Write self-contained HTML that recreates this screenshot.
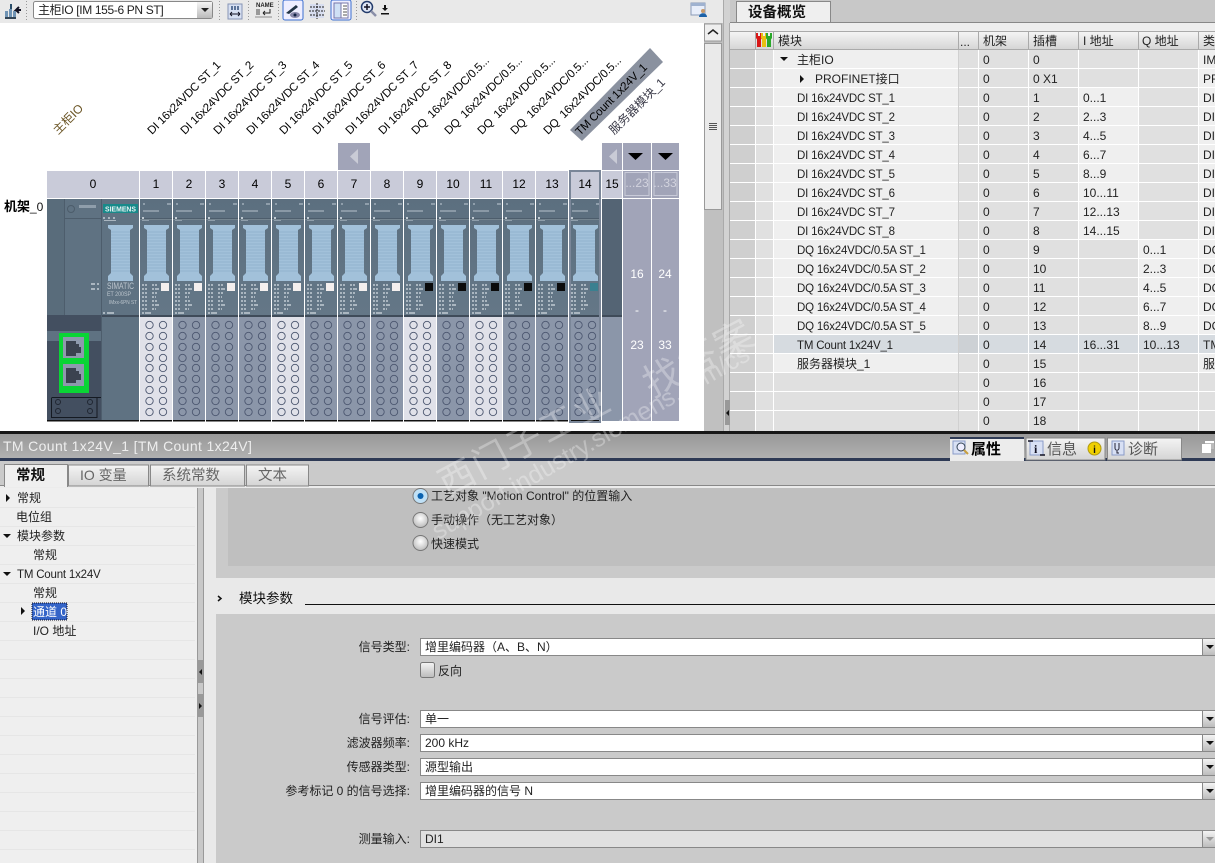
<!DOCTYPE html>
<html><head><meta charset="utf-8"><title>TM Count</title>
<style>
html,body{margin:0;padding:0;background:#c8c8c8;width:1215px;height:863px;overflow:hidden}
svg{display:block}
text{font-family:"Liberation Sans","Noto Sans CJK SC",sans-serif;font-size:12px;fill:#222}
.lab text{font-size:11.5px;letter-spacing:-.2px;fill:#000}
.lab .c{font-size:12px;letter-spacing:0}
.n text,text.n{font-size:11.5px;letter-spacing:-.2px}
.hd text{font-size:12px;fill:#222}
</style></head><body>
<svg width="1215" height="863" viewBox="0 0 1215 863" xmlns="http://www.w3.org/2000/svg">
<defs>
<linearGradient id="gh" x1="0" y1="0" x2="0" y2="1"><stop offset="0" stop-color="#f4f4f4"/><stop offset="1" stop-color="#d4d4d4"/></linearGradient>
<linearGradient id="gt" x1="0" y1="0" x2="0" y2="1"><stop offset="0" stop-color="#999"/><stop offset="1" stop-color="#b0b0b0"/></linearGradient>
<linearGradient id="gb" x1="0" y1="0" x2="0" y2="1"><stop offset="0" stop-color="#f5f5f5"/><stop offset="1" stop-color="#bbb"/></linearGradient>
<linearGradient id="gm" x1="0" y1="0" x2="0" y2="1"><stop offset="0" stop-color="#5c6f7f"/><stop offset="1" stop-color="#647787"/></linearGradient>
<radialGradient id="rb" cx=".5" cy=".4" r=".6"><stop offset="0" stop-color="#fff"/><stop offset="1" stop-color="#bbb"/></radialGradient>
<g id="top">
<rect width="32" height="116" fill="url(#gm)"/>
<rect x="0" y="19" width="32" height="1" fill="#4d5d6c"/>
<rect x="0" y="20" width="32" height="1" fill="#74848f"/>
<rect x="3" y="4" width="2" height="2" fill="#8f9eab"/><rect x="27" y="4" width="4" height="2" fill="#8f9eab"/>
<rect x="3" y="11" width="16" height="2" fill="#8a99a6"/>
<rect x="2" y="18" width="2" height="2" fill="#c0cad2"/><rect x="2" y="21" width="7" height="1" fill="#8f9eab"/>
<path d="M4 26H29V29L26 31V74L29 77V82H4V77L7 74V31L4 29Z" fill="#a2c1da"/>
<path d="M7 33H26M7 36H26M7 39H26M7 42H26M7 45H26M7 48H26M7 51H26M7 54H26M7 57H26M7 60H26M7 63H26M7 66H26M7 69H26M7 72H26" stroke="#93b4cf" stroke-width="1"/>
<path d="M2 85h2v2h-2zM5 85h2v2h-2zM12 85h2v2h-2zM15 85h2v2h-2zM2 89h2v2h-2zM5 89h2v2h-2zM12 89h2v2h-2zM15 89h4v2h-4zM2 93h2v2h-2zM5 93h2v2h-2zM12 93h2v2h-2zM15 93h2v2h-2zM2 97h2v2h-2zM5 97h2v2h-2zM12 97h2v2h-2zM15 97h1v2h-1zM2 101h2v2h-2zM5 101h2v2h-2zM12 101h2v2h-2zM15 101h2v2h-2zM2 105h2v2h-2zM5 105h2v2h-2zM12 105h2v2h-2zM15 105h4v2h-4zM2 109h2v2h-2zM5 109h2v2h-2zM12 109h2v2h-2zM15 109h1v2h-1zM2 113h2v2h-2zM5 113h6v2h-6z" fill="#aab6c0"/>
<rect x="0" y="116" width="32" height="2" fill="#3f4b59"/>
</g>
<g id="holes" fill="none" stroke="#4c5770" stroke-width=".9">
<circle cx="9.500" cy="325" r="3.700"/><circle cx="23" cy="325" r="3.700"/><circle cx="9.500" cy="336" r="3.700"/><circle cx="23" cy="336" r="3.700"/><circle cx="9.500" cy="347" r="3.700"/><circle cx="23" cy="347" r="3.700"/><circle cx="9.500" cy="358" r="3.700"/><circle cx="23" cy="358" r="3.700"/><circle cx="9.500" cy="368" r="3.700"/><circle cx="23" cy="368" r="3.700"/><circle cx="9.500" cy="379" r="3.700"/><circle cx="23" cy="379" r="3.700"/><circle cx="9.500" cy="390" r="3.700"/><circle cx="23" cy="390" r="3.700"/><circle cx="9.500" cy="401" r="3.700"/><circle cx="23" cy="401" r="3.700"/><circle cx="9.500" cy="412" r="3.700"/><circle cx="23" cy="412" r="3.700"/>
</g>
<g id="mL"><use href="#top" y="199"/><rect y="317" width="32" height="103" fill="#e0e1e9"/><use href="#holes"/><rect y="420" width="32" height="1.500" fill="#111"/></g>
<g id="mG"><use href="#top" y="199"/><rect y="317" width="32" height="103" fill="#8b96a9"/><use href="#holes"/><rect y="420" width="32" height="1.500" fill="#111"/></g>
<rect id="sqW" y="283" width="8" height="8" fill="#f4efee"/>
<rect id="sqB" y="283" width="8" height="8" fill="#0b0b0b"/>
</defs>

<!-- editor canvas -->
<rect x="0" y="0" width="723" height="431" fill="#fff"/>
<rect x="0" y="0" width="723" height="23" fill="#e9e9e9"/>
<path d="M26.500 1V22M219.500 1V22M248.500 1V22M278.500 1V22M356.500 1V22" stroke="#999" stroke-dasharray="1 2"/>
<!-- toolbar icons -->
<path d="M5 17V11h3v6zM9 17V9h3v8zM13 17V11h3v6z" fill="#6f93b4"/><path d="M10 4l2 0v5h-2z" fill="#2a4d69"/><path d="M21 10h-5l3-3M16 10l3 3" stroke="#112" stroke-width="2" fill="none"/><rect x="5" y="17" width="11" height="2" fill="#345"/>
<rect x="33.500" y="1.500" width="179" height="17" rx="2" fill="#fff" stroke="#888"/>
<text x="38" y="14" style="letter-spacing:-.35px">主柜IO [IM 155-6 PN ST]</text>
<rect x="197" y="2" width="15" height="16" fill="url(#gb)"/><path d="M201 8h8l-4 4z" fill="#222"/>
<rect x="228" y="4" width="14" height="15" fill="#d7e0f2" stroke="#8795b5"/><path d="M231 6h2v4h-2zM234 6h2v4h-2zM237 6h2v4h-2z" fill="#5b7399"/><path d="M230 14h10M230 14l2-2M230 14l2 2M240 14l-2-2M240 14l-2 2" stroke="#112" fill="none"/>
<text x="256" y="7" style="font-size:6px;font-weight:bold">NAME</text><rect x="256" y="9" width="4" height="6" fill="#999"/><path d="M270 9v4h-7M263 13l2-2M263 13l2 2" stroke="#222" fill="none"/><rect x="255" y="16" width="17" height="2" fill="#bbb"/>
<rect x="283" y="0" width="20" height="20" rx="2" fill="#eef" stroke="#3c6fd0"/><path d="M286 13l10-8 2 2-9 7z" fill="#234"/><ellipse cx="295" cy="15" rx="5" ry="3" fill="#88a" /><circle cx="295" cy="15" r="1.500" fill="#124"/>
<rect x="310" y="4" width="14" height="14" fill="#d8def0"/><path d="M317 3V19M309 11H325M310 7h14M310 15h14" stroke="#222" stroke-dasharray="2 1" fill="none"/>
<rect x="331" y="0" width="20" height="20" rx="2" fill="#eef" stroke="#3c6fd0"/><rect x="334" y="3" width="7" height="15" fill="#cfe0f5" stroke="#77a"/><rect x="341" y="3" width="7" height="15" fill="#fff" stroke="#77a"/><path d="M343 6h4M343 9h4M343 12h4M343 15h4" stroke="#555"/>
<circle cx="367" cy="7" r="5.500" fill="#dfe6f5" stroke="#223a6a" stroke-width="1.500"/><path d="M364 7h6M367 4v6" stroke="#112" stroke-width="1.500"/><path d="M371 11l5 5" stroke="#8a8fa8" stroke-width="2.500"/>
<path d="M384 5h2v3h2l-3 3-3-3h2zM381 13h8v1.500h-8z" fill="#111"/>
<rect x="691" y="3" width="14" height="12" fill="#e8eefa" stroke="#8a9bb8"/><rect x="691" y="3" width="14" height="3" fill="#9fb2d0"/><circle cx="703" cy="11" r="2" fill="#c89a6a"/><path d="M699 17c0-5 8-5 8 0z" fill="#1c62a8"/>
<!-- scrollbar -->
<rect x="704" y="23" width="19" height="408" fill="#c0c0c0"/>
<rect x="704.500" y="24" width="17" height="17" fill="#eee" stroke="#999"/><path d="M708 34l5-4 5 4" stroke="#222" stroke-width="1.500" fill="none"/>
<rect x="704.500" y="43.500" width="17" height="166" fill="#eaeaea" stroke="#999"/><path d="M709 123.500h8M709 125.500h8M709 127.500h8M709 129.500h8" stroke="#555"/>

<!-- rotated labels -->
<g class="lab">
<text class="c" transform="translate(58,135) rotate(-45)" style="fill:#6a5424">主柜IO</text>
<text transform="translate(152,135) rotate(-45)">DI 16x24VDC ST_1</text>
<text transform="translate(185,135) rotate(-45)">DI 16x24VDC ST_2</text>
<text transform="translate(218,135) rotate(-45)">DI 16x24VDC ST_3</text>
<text transform="translate(251,135) rotate(-45)">DI 16x24VDC ST_4</text>
<text transform="translate(284,135) rotate(-45)">DI 16x24VDC ST_5</text>
<text transform="translate(317,135) rotate(-45)">DI 16x24VDC ST_6</text>
<text transform="translate(350,135) rotate(-45)">DI 16x24VDC ST_7</text>
<text transform="translate(383,135) rotate(-45)">DI 16x24VDC ST_8</text>
<text transform="translate(416,135) rotate(-45)">DQ&#160;&#160;16x24VDC/0.5...</text>
<text transform="translate(449,135) rotate(-45)">DQ&#160;&#160;16x24VDC/0.5...</text>
<text transform="translate(482,135) rotate(-45)">DQ&#160;&#160;16x24VDC/0.5...</text>
<text transform="translate(515,135) rotate(-45)">DQ&#160;&#160;16x24VDC/0.5...</text>
<text transform="translate(548,135) rotate(-45)">DQ&#160;&#160;16x24VDC/0.5...</text>
<polygon points="570,130 582,141 663,62 650,48" fill="#8a919f"/>
<text transform="translate(580,136) rotate(-45)">TM Count 1x24V_1</text>
<text class="c" transform="translate(614,135) rotate(-45)" style="fill:#3a3a48">服务器模块_1</text>
</g>

<!-- header buttons -->
<rect x="338" y="143" width="32" height="27" fill="#a1a4b8"/><path d="M358 149v15l-8-7.500z" fill="#c9cbd6"/>
<rect x="602" y="143" width="20" height="27" fill="#a1a4b8"/><path d="M617 149v15l-8-7.500z" fill="#c9cbd6"/>
<rect x="623" y="143" width="28" height="27" fill="#a1a4b8"/><path d="M628 153h15l-7.500 7z" fill="#000"/>
<rect x="652" y="143" width="27" height="27" fill="#a1a4b8"/><path d="M658 153h15l-7.500 7z" fill="#000"/>
<!-- slot numbers -->
<g fill="#c9cbd9">
<rect x="47" y="171" width="92" height="27"/><rect x="140" y="171" width="32" height="27"/><rect x="173" y="171" width="32" height="27"/><rect x="206" y="171" width="32" height="27"/><rect x="239" y="171" width="32" height="27"/><rect x="272" y="171" width="32" height="27"/><rect x="305" y="171" width="32" height="27"/><rect x="338" y="171" width="32" height="27"/><rect x="371" y="171" width="32" height="27"/><rect x="404" y="171" width="32" height="27"/><rect x="437" y="171" width="32" height="27"/><rect x="470" y="171" width="32" height="27"/><rect x="503" y="171" width="32" height="27"/><rect x="536" y="171" width="32" height="27"/><rect x="569" y="171" width="32" height="27"/><rect x="602" y="171" width="20" height="27"/>
</g>
<g text-anchor="middle" style="font-weight:500">
<text x="93" y="188" style="fill:#000">0</text><text x="156" y="188" style="fill:#000">1</text><text x="189" y="188" style="fill:#000">2</text><text x="222" y="188" style="fill:#000">3</text><text x="255" y="188" style="fill:#000">4</text><text x="288" y="188" style="fill:#000">5</text><text x="321" y="188" style="fill:#000">6</text><text x="354" y="188" style="fill:#000">7</text><text x="387" y="188" style="fill:#000">8</text><text x="420" y="188" style="fill:#000">9</text><text x="453" y="188" style="fill:#000">10</text><text x="486" y="188" style="fill:#000">11</text><text x="519" y="188" style="fill:#000">12</text><text x="552" y="188" style="fill:#000">13</text><text x="585" y="188" style="fill:#000">14</text><text x="612" y="188" style="fill:#000">15</text>
</g>
<rect x="623" y="171" width="28" height="27" fill="#a1a4b8"/><rect x="625" y="172.500" width="24" height="23" fill="none" stroke="#c9cbd9"/>
<rect x="652" y="171" width="27" height="27" fill="#a1a4b8"/><rect x="654" y="172.500" width="23" height="23" fill="none" stroke="#c9cbd9"/>
<text x="637" y="187" text-anchor="middle" style="fill:#d2d3de">...23</text><text x="665" y="187" text-anchor="middle" style="fill:#d2d3de">...33</text>

<text x="4" y="211" style="font-size:13px;font-weight:bold;fill:#000">机架</text><text x="30" y="211" style="fill:#111">_0</text>

<!-- slot 0 -->
<rect x="47" y="199" width="92" height="116" fill="#5f7282"/>
<rect x="47" y="199" width="17" height="116" fill="#596c7b"/>
<rect x="64" y="199" width="1" height="116" fill="#4d5d6c"/>
<rect x="64" y="218" width="37" height="1" fill="#4d5d6c"/>
<rect x="101" y="199" width="1" height="222" fill="#4d5d6c"/>
<circle cx="71" cy="209" r="3.500" fill="none" stroke="#4c5c6a"/>
<rect x="79" y="205" width="17" height="3" fill="#8f9eab"/>
<path d="M91 283h4v2h-4zM97 283h2v2h-2zM91 288h4v2h-4zM97 288h2v2h-2z" fill="#aab6c0"/>
<rect x="103" y="204" width="35" height="9" fill="#188a8a"/>
<text x="105" y="211.500" textLength="31" lengthAdjust="spacingAndGlyphs" style="font-size:7.500px;font-weight:bold;fill:#e8f4f4">SIEMENS</text>
<path d="M103 217h2v2h-2zM108 217h2v2h-2zM113 217h2v2h-2zM104 220h12v1h-12z" fill="#aab6c0"/>
<path d="M108 225H133V228L130 230V273L133 276V281H108V276L111 273V230L108 228Z" fill="#a2c1da"/>
<path d="M111 232H130M111 235H130M111 238H130M111 241H130M111 244H130M111 247H130M111 250H130M111 253H130M111 256H130M111 259H130M111 262H130M111 265H130M111 268H130M111 271H130" stroke="#93b4cf"/>
<text x="107" y="289" textLength="27" lengthAdjust="spacingAndGlyphs" style="font-size:9px;fill:#bcc5cd">SIMATIC</text>
<text x="107" y="296" textLength="24" lengthAdjust="spacingAndGlyphs" style="font-size:6.500px;fill:#bcc5cd">ET 200SP</text>
<text x="109" y="304" textLength="28" lengthAdjust="spacingAndGlyphs" style="font-size:5.500px;fill:#bcc5cd">IMxx-6PN ST</text>
<path d="M103 312h2v2h-2zM107 312h7v2h-7z" fill="#aab6c0"/>
<rect x="47" y="315" width="54" height="106" fill="#434f60"/>
<rect x="47" y="331" width="54" height="10" fill="#5f7282"/>
<rect x="102" y="315" width="37" height="2" fill="#3f4b59"/>
<rect x="102" y="317" width="37" height="104" fill="#5f7282"/>
<rect x="59" y="333" width="30" height="60" fill="#0ad535"/>
<rect x="63" y="337" width="21" height="21" fill="#8e99ad"/><path d="M66 341h10v3h3v3h2v6h-5v3h-10z" fill="#3b4250"/>
<rect x="63" y="364" width="21" height="22" fill="#8e99ad"/><path d="M66 368h10v3h3v3h2v6h-5v3h-10z" fill="#3b4250"/>
<path d="M52 397.500H101M97 397.500V417.500H51.500V397.500" fill="none" stroke="#151a22"/>
<g fill="none" stroke="#202632"><circle cx="58" cy="402" r="2.500"/><circle cx="90" cy="402" r="2.500"/><circle cx="58" cy="411" r="2.500"/><circle cx="90" cy="411" r="2.500"/></g>
<rect x="47" y="420" width="92" height="1.500" fill="#111"/>

<!-- modules -->
<use href="#mL" x="140"/><use href="#mG" x="173"/><use href="#mG" x="206"/><use href="#mG" x="239"/><use href="#mL" x="272"/><use href="#mG" x="305"/><use href="#mG" x="338"/><use href="#mG" x="371"/><use href="#mL" x="404"/><use href="#mG" x="437"/><use href="#mL" x="470"/><use href="#mG" x="503"/><use href="#mG" x="536"/><use href="#mG" x="569"/>
<use href="#sqW" x="161"/><use href="#sqW" x="194"/><use href="#sqW" x="227"/><use href="#sqW" x="260"/><use href="#sqW" x="293"/><use href="#sqW" x="326"/><use href="#sqW" x="359"/><use href="#sqW" x="392"/>
<use href="#sqB" x="425"/><use href="#sqB" x="458"/><use href="#sqB" x="491"/><use href="#sqB" x="524"/><use href="#sqB" x="557"/>
<rect x="590" y="283" width="8" height="8" fill="#3a8090"/>
<rect x="570" y="171" width="30" height="251" fill="none" stroke="#7a8698" stroke-width="2"/>
<!-- slot 15 & free -->
<rect x="602" y="199" width="20" height="116" fill="#546474"/><rect x="602" y="315" width="20" height="2" fill="#3f4b59"/><rect x="602" y="317" width="20" height="104" fill="#8b96a9"/>
<rect x="623" y="199" width="28" height="222" fill="#a1a4b8"/><rect x="652" y="199" width="27" height="222" fill="#a1a4b8"/>
<g text-anchor="middle">
<text x="637" y="278" style="fill:#fff">16</text><text x="637" y="314" style="fill:#fff">-</text><text x="637" y="349" style="fill:#fff">23</text>
<text x="665" y="278" style="fill:#fff">24</text><text x="665" y="314" style="fill:#fff">-</text><text x="665" y="349" style="fill:#fff">33</text>
</g>

<!-- splitter / device overview -->
<rect x="723" y="0" width="7" height="431" fill="#d2d2d2"/>
<path d="M723.500 0V431M729.500 23V431" stroke="#aaa"/>
<rect x="725" y="400" width="5" height="25" fill="#999"/><path d="M729 410v6l-3-3z" fill="#111"/>
<rect x="730" y="0" width="485" height="23" fill="#c8c8c8"/>
<path d="M730 22.500H1215" stroke="#888"/>
<path d="M736.500 22V1.500H830.500V22" fill="#efefef" stroke="#888"/>
<text x="748" y="17" style="font-size:14.500px;font-weight:bold;fill:#111">设备概览</text>
<rect x="730" y="23" width="485" height="9" fill="#eee"/>
<rect x="730" y="32" width="485" height="18" fill="url(#gh)"/>
<path d="M730 31.500H1215M730 49.500H1215" stroke="#aaa"/>
<path d="M755.500 32V50M773.500 32V50M958.500 32V50M978.500 32V50M1028.500 32V50M1078.500 32V50M1138.500 32V50M1198.500 32V50" stroke="#aaa"/>
<path d="M756 33h2v3h2v-3h2v5l-1 1.500V47h-4V39.500L756 38z" fill="#d81818"/>
<path d="M761 33h2v3h2v-3h2v5l-1 1.500V47h-4V39.500L761 38z" fill="#e8c010"/>
<path d="M766 33h2v3h2v-3h2v5l-1 1.500V47h-4V39.500L766 38z" fill="#2aa82a"/>
<g class="hd">
<text x="778" y="45">模块</text><text x="960" y="46">...</text><text x="983" y="45">机架</text><text x="1033" y="45">插槽</text><text x="1083" y="45">I 地址</text><text x="1142" y="45">Q 地址</text><text x="1203" y="45">类</text>
</g>
<!-- table bg -->
<rect x="730" y="50" width="25" height="381" fill="#cfcfcf"/>
<rect x="756" y="50" width="459" height="381" fill="#e0e0e0"/>
<rect x="774" y="50" width="184" height="323" fill="#efefef"/>
<rect x="1079" y="88" width="59" height="152" fill="#efefef"/>
<rect x="1139" y="240" width="59" height="95" fill="#efefef"/>
<rect x="1199" y="50" width="16" height="323" fill="#efefef"/>
<rect x="774" y="335" width="441" height="19" fill="#d6dbe0"/><rect x="958" y="335" width="20" height="19" fill="#cdd1d5"/>
<path d="M730 68.500H1215M730 87.500H1215M730 106.500H1215M730 125.500H1215M730 144.500H1215M730 163.500H1215M730 182.500H1215M730 201.500H1215M730 220.500H1215M730 239.500H1215M730 258.500H1215M730 277.500H1215M730 296.500H1215M730 315.500H1215M730 334.500H1215M730 353.500H1215M730 372.500H1215M730 391.500H1215M730 410.500H1215" stroke="#fff"/>
<path d="M755.500 50V431M773.500 50V431M978.500 50V431M1028.500 50V431M1078.500 50V431M1138.500 50V431M1198.500 50V431" stroke="#fff"/>
<path d="M958.500 50V431" stroke="#d0d0d0"/>
<path d="M780 57h8l-4 4z" fill="#111"/><path d="M800 75v8l4-4z" fill="#111"/>
<g>
<text x="797" y="64">主柜IO</text><text x="815" y="83">PROFINET接口</text>
<g class="n">
<text x="797" y="102">DI 16x24VDC ST_1</text><text x="797" y="121">DI 16x24VDC ST_2</text><text x="797" y="140">DI 16x24VDC ST_3</text><text x="797" y="159">DI 16x24VDC ST_4</text><text x="797" y="178">DI 16x24VDC ST_5</text><text x="797" y="197">DI 16x24VDC ST_6</text><text x="797" y="216">DI 16x24VDC ST_7</text><text x="797" y="235">DI 16x24VDC ST_8</text>
<text x="797" y="254">DQ 16x24VDC/0.5A ST_1</text><text x="797" y="273">DQ 16x24VDC/0.5A ST_2</text><text x="797" y="292">DQ 16x24VDC/0.5A ST_3</text><text x="797" y="311">DQ 16x24VDC/0.5A ST_4</text><text x="797" y="330">DQ 16x24VDC/0.5A ST_5</text>
<text x="797" y="349">TM Count 1x24V_1</text>
</g>
<text x="797" y="368">服务器模块_1</text>
</g>
<g>
<text x="983" y="64">0</text><text x="983" y="83">0</text><text x="983" y="102">0</text><text x="983" y="121">0</text><text x="983" y="140">0</text><text x="983" y="159">0</text><text x="983" y="178">0</text><text x="983" y="197">0</text><text x="983" y="216">0</text><text x="983" y="235">0</text><text x="983" y="254">0</text><text x="983" y="273">0</text><text x="983" y="292">0</text><text x="983" y="311">0</text><text x="983" y="330">0</text><text x="983" y="349">0</text><text x="983" y="368">0</text><text x="983" y="387">0</text><text x="983" y="406">0</text><text x="983" y="425">0</text>
<text x="1033" y="64">0</text><text x="1033" y="83">0 X1</text><text x="1033" y="102">1</text><text x="1033" y="121">2</text><text x="1033" y="140">3</text><text x="1033" y="159">4</text><text x="1033" y="178">5</text><text x="1033" y="197">6</text><text x="1033" y="216">7</text><text x="1033" y="235">8</text><text x="1033" y="254">9</text><text x="1033" y="273">10</text><text x="1033" y="292">11</text><text x="1033" y="311">12</text><text x="1033" y="330">13</text><text x="1033" y="349">14</text><text x="1033" y="368">15</text><text x="1033" y="387">16</text><text x="1033" y="406">17</text><text x="1033" y="425">18</text>
<text x="1083" y="102">0...1</text><text x="1083" y="121">2...3</text><text x="1083" y="140">4...5</text><text x="1083" y="159">6...7</text><text x="1083" y="178">8...9</text><text x="1083" y="197">10...11</text><text x="1083" y="216">12...13</text><text x="1083" y="235">14...15</text><text x="1083" y="349">16...31</text>
<text x="1143" y="254">0...1</text><text x="1143" y="273">2...3</text><text x="1143" y="292">4...5</text><text x="1143" y="311">6...7</text><text x="1143" y="330">8...9</text><text x="1143" y="349">10...13</text>
<text x="1203" y="64">IM</text><text x="1203" y="83">PR</text><text x="1203" y="102">DI</text><text x="1203" y="121">DI</text><text x="1203" y="140">DI</text><text x="1203" y="159">DI</text><text x="1203" y="178">DI</text><text x="1203" y="197">DI</text><text x="1203" y="216">DI</text><text x="1203" y="235">DI</text><text x="1203" y="254">DQ</text><text x="1203" y="273">DQ</text><text x="1203" y="292">DQ</text><text x="1203" y="311">DQ</text><text x="1203" y="330">DQ</text><text x="1203" y="349">TM</text><text x="1203" y="368">服</text>
</g>

<!-- inspector title -->
<rect x="0" y="431" width="1215" height="3" fill="#171717"/>
<rect x="0" y="434" width="1215" height="24" fill="url(#gt)"/>
<rect x="0" y="458" width="1215" height="3" fill="#2e3a55"/>
<text x="3" y="451" style="font-size:14px;fill:#eee;letter-spacing:.36px">TM Count 1x24V_1 [TM Count 1x24V]</text>
<rect x="950" y="437" width="74" height="25" fill="#ececec"/><rect x="950" y="437" width="74" height="2" fill="#2e3a55"/>
<rect x="953" y="441" width="12" height="13" fill="#d8e0f4" stroke="#8a9bc8"/><circle cx="961" cy="447" r="4" fill="#eef" stroke="#345"/><path d="M964 450l4 4" stroke="#c8a040" stroke-width="2"/>
<text x="971" y="454" style="font-size:15px;font-weight:bold;fill:#000">属性</text>
<rect x="1026" y="438" width="79" height="22" fill="url(#gh)" stroke="#888"/>
<rect x="1030" y="441" width="13" height="14" fill="#d8e0f4" stroke="#8a9bc8"/><text x="1034" y="453" style="font-size:12px;font-weight:bold;font-family:'Liberation Serif',serif;fill:#112">i</text><path d="M1028 441h5M1040 455h5" stroke="#112" stroke-width="1.500"/>
<text x="1047" y="454" style="font-size:15px;fill:#555">信息</text>
<circle cx="1094.500" cy="448.500" r="6.500" fill="#f0d000" stroke="#b09a10"/><text x="1094.500" y="453" text-anchor="middle" style="font-size:10px;font-weight:bold;fill:#111">i</text>
<rect x="1107.500" y="438" width="74" height="22" fill="url(#gh)" stroke="#888"/>
<rect x="1112" y="441" width="12" height="14" fill="#d8e0f4" stroke="#8a9bc8"/><path d="M1115 443v5c0 3 4 3 4 0v-5M1117 451v2h2" stroke="#223" fill="none"/>
<text x="1128" y="454" style="font-size:15px;fill:#555">诊断</text>
<rect x="1205" y="441" width="9" height="8" fill="#bbb"/><rect x="1202" y="444" width="9" height="9" fill="#fff"/><rect x="1205" y="441" width="9" height="2" fill="#fff"/>

<!-- tabs -->
<rect x="0" y="461" width="1215" height="25" fill="#cacaca"/>
<path d="M0 485.500H1215" stroke="#888"/><rect x="0" y="486" width="1215" height="2" fill="#ececec"/>
<rect x="68.500" y="465" width="80" height="21" fill="url(#gh)" stroke="#888"/><rect x="150.500" y="465" width="94" height="21" fill="url(#gh)" stroke="#888"/><rect x="246.500" y="465" width="62" height="21" fill="url(#gh)" stroke="#888"/>
<path d="M4.500 487V464.500H67.500V487" fill="#efefef" stroke="#888"/>
<text x="16" y="480" style="font-size:14.500px;font-weight:bold;fill:#111">常规</text>
<text x="80" y="480" style="font-size:14px;fill:#666">IO 变量</text>
<text x="162" y="480" style="font-size:14.500px;fill:#666">系统常数</text>
<text x="258" y="480" style="font-size:14.500px;fill:#666">文本</text>

<!-- tree -->
<rect x="0" y="488" width="197" height="375" fill="#efefef"/>
<path d="M0 507.500H195M0 526.500H195M0 545.500H195M0 564.500H195M0 583.500H195M0 602.500H195M0 621.500H195M0 640.500H195M0 659.500H195M0 678.500H195M0 697.500H195M0 716.500H195M0 735.500H195M0 754.500H195M0 773.500H195M0 792.500H195M0 811.500H195M0 830.500H195M0 849.500H195" stroke="#e6e6e6"/>
<path d="M6 494v8l4-4z" fill="#111"/><path d="M3 534h8l-4 4zM3 572h8l-4 4z" fill="#111"/><path d="M21 607v8l4-4z" fill="#111"/>
<text x="17" y="502">常规</text><text x="16" y="521">电位组</text><text x="17" y="540">模块参数</text><text x="33" y="559">常规</text><text x="17" y="578" class="n">TM Count 1x24V</text><text x="33" y="597">常规</text>
<rect x="32" y="603" width="35" height="17" fill="#3464c8"/><rect x="32" y="603" width="35" height="17" fill="none" stroke="#112" stroke-dasharray="1 1"/>
<text x="33" y="616" style="fill:#fff">通道 0</text>
<text x="33" y="635">I/O 地址</text>
<!-- v splitter -->
<rect x="197" y="488" width="7" height="375" fill="#c8c8c8"/><path d="M197.500 488V863M203.500 488V863" stroke="#999"/>
<rect x="197" y="660" width="7" height="23" fill="#999"/><path d="M202 669v6l-3-3z" fill="#111"/>
<rect x="197" y="694" width="7" height="23" fill="#999"/><path d="M199 703v6l3-3z" fill="#111"/>

<!-- content -->
<rect x="204" y="488" width="1011" height="375" fill="#e9e9e9"/>
<rect x="216" y="488" width="999" height="90" fill="#cacaca"/>
<rect x="228" y="488" width="987" height="78" fill="#bfbfbf"/>
<rect x="216" y="614" width="999" height="249" fill="#cacaca"/>
<path d="M218 596l3 2.500-3 2.500" stroke="#111" stroke-width="1.500" fill="none"/>
<text x="239" y="603" style="font-size:13.500px;fill:#111">模块参数</text>
<path d="M305 604.500H1215" stroke="#111"/>

<circle cx="420.500" cy="496" r="7.500" fill="#bfe0f6" stroke="#777"/><circle cx="420.500" cy="496" r="3" fill="#0a62b0"/>
<circle cx="420.500" cy="520" r="7.500" fill="url(#rb)" stroke="#777"/><circle cx="420.500" cy="543" r="7.500" fill="url(#rb)" stroke="#777"/>
<text x="431" y="500">工艺对象 "Motion Control" 的位置输入</text>
<text x="431" y="524">手动操作（无工艺对象）</text>
<text x="431" y="548">快速模式</text>

<!-- form -->
<g text-anchor="end">
<text x="410" y="651">信号类型:</text><text x="410" y="723">信号评估:</text><text x="410" y="747">滤波器频率:</text><text x="410" y="771">传感器类型:</text><text x="410" y="795">参考标记 0 的信号选择:</text><text x="410" y="843">测量输入:</text>
</g>
<g fill="#fff" stroke="#888">
<rect x="420.500" y="638.500" width="800" height="17"/><rect x="420.500" y="710.500" width="800" height="17"/><rect x="420.500" y="734.500" width="800" height="17"/><rect x="420.500" y="758.500" width="800" height="17"/><rect x="420.500" y="782.500" width="800" height="17"/>
<rect x="420.500" y="830.500" width="800" height="17" fill="#e0e0e0"/>
</g>
<g fill="url(#gb)" stroke="#888">
<rect x="1202.500" y="638.500" width="14" height="17"/><rect x="1202.500" y="710.500" width="14" height="17"/><rect x="1202.500" y="734.500" width="14" height="17"/><rect x="1202.500" y="758.500" width="14" height="17"/><rect x="1202.500" y="782.500" width="14" height="17"/><rect x="1202.500" y="830.500" width="14" height="17"/>
</g>
<path d="M1206 645h8l-4 4zM1206 717h8l-4 4zM1206 741h8l-4 4zM1206 765h8l-4 4zM1206 789h8l-4 4z" fill="#111"/><path d="M1206 837h8l-4 4z" fill="#999"/>
<text x="425" y="651">增里编码器（A、B、N）</text><text x="425" y="723">单一</text><text x="425" y="747">200 kHz</text><text x="425" y="771">源型输出</text><text x="425" y="795">增里编码器的信号 N</text><text x="425" y="843">DI1</text>
<rect x="420.500" y="662.500" width="14" height="15" rx="2" fill="url(#gb)" stroke="#777"/>
<text x="438" y="675">反向</text>

<!-- watermark -->
<g opacity=".3">
<text transform="translate(447,497) rotate(-28)" style="font-size:36px;fill:#fff;letter-spacing:2px">西门子工业</text>
<text transform="translate(652,398) rotate(-28)" style="font-size:38px;fill:#fff;letter-spacing:2px">找答案</text>
<text transform="translate(438,540) rotate(-30)" style="font-size:25px;fill:#fff">support.industry.siemens.com/cs</text>
</g>
</svg>
</body></html>
